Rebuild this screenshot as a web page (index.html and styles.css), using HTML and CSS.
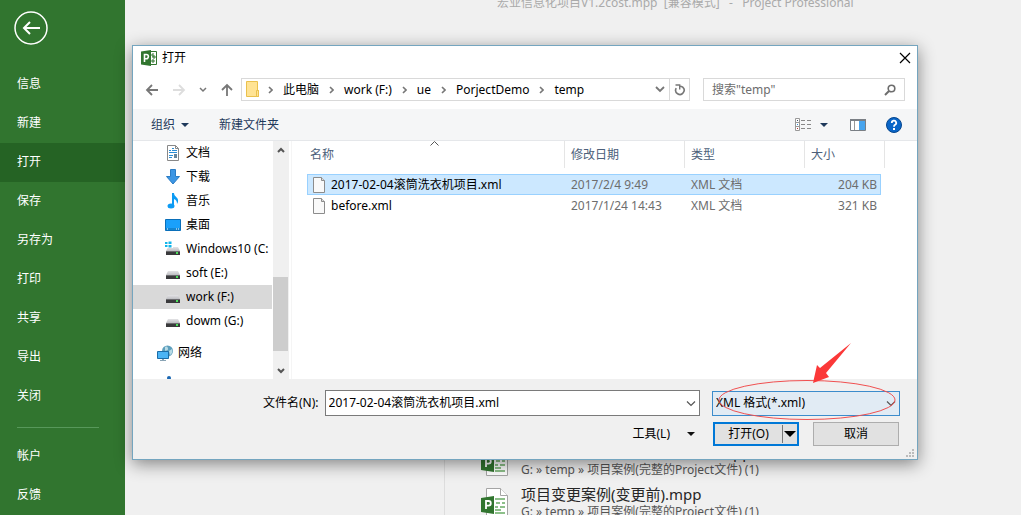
FILE: index.html
```
<!DOCTYPE html>
<html lang="zh-CN">

<head>
    <meta charset="utf-8">
    <title>打开</title>
    <link rel="stylesheet" href="styles.css">
</head>

<body>
    <!-- 共用图标 -->
    <svg class="defs" width="0" height="0" aria-hidden="true">
        <defs>
            <linearGradient id="disk-top" x1="0" y1="0" x2="0" y2="1">
                <stop offset="0" stop-color="#e4e4e6" />
                <stop offset="1" stop-color="#bdbec2" />
            </linearGradient>
            <symbol id="chevron" viewBox="0 0 5 8">
                <path d="M1 1l3 3-3 3" fill="none" stroke="#777" stroke-width="1.6" />
            </symbol>
            <symbol id="disk" viewBox="0 0 16 16">
                <path d="M3 5h10l2 4H1z" fill="url(#disk-top)" />
                <path d="M1 9h14v4H1z" fill="#3a3a3c" />
                <path d="M1 9h14v1H1z" fill="#6b6b6e" />
                <path d="M11 10h2v2h-2z" fill="#4be05a" />
            </symbol>
            <symbol id="file" viewBox="0 0 14 16">
                <path d="M1.500.5h8l3 3v12h-11z" fill="#f9f9f9" stroke="#8c8c8c" />
                <path d="M9.500.5v3h3" fill="#ddd" stroke="#8c8c8c" />
            </symbol>
            <symbol id="mpp" viewBox="0 0 28 32">
                <path d="M5.500 1.500h14l7 7v22h-21z" fill="#fff" stroke="#a5a5a5" />
                <path d="M19.500 1.500v7h7" fill="#fff" stroke="#a5a5a5" />
                <path d="M14 12h10M14 26h10M15 16h4M21 16h3M14 20h3M19 20h5M14 23h6" stroke="#8dc08a" stroke-width="2" />
                <path d="M0 11l13-2v18L0 25z" fill="#31752f" />
                <path d="M5 22v-8h2.500a2.200 2.200 0 0 1 0 4.600H5" fill="none" stroke="#fff" stroke-width="1.800" />
            </symbol>
        </defs>
    </svg>

    <nav class="menu">
        <button class="back" aria-label="返回">
            <svg width="34" height="34" viewBox="0 0 34 34" fill="none" stroke="#fff" stroke-width="2">
                <circle cx="17" cy="17" r="16" stroke-width="1.500" />
                <path d="M26 17H10M16 11l-6 6 6 6" />
            </svg>
        </button>
        <a href="#">信息</a>
        <a href="#">新建</a>
        <a href="#" class="active">打开</a>
        <a href="#">保存</a>
        <a href="#">另存为</a>
        <a href="#">打印</a>
        <a href="#">共享</a>
        <a href="#">导出</a>
        <a href="#">关闭</a>
        <hr>
        <a href="#">帐户</a>
        <a href="#">反馈</a>
    </nav>

    <main class="page">
        <div class="page-title">宏业信息化项目V1.2cost.mpp&nbsp; [兼容模式]&nbsp;&nbsp; -&nbsp;&nbsp; Project Professional</div>
        <div class="recent">
            <a href="#" class="recent-item">
                <svg width="28" height="32"><use href="#mpp" /></svg>
                <span>
                    <span class="recent-name">宏业信息化项目V1.2cost案例.mpp</span>
                    <span class="recent-path">G: » temp » 项目案例(完整的Project文件) (1)</span>
                </span>
            </a>
            <a href="#" class="recent-item">
                <svg width="28" height="32"><use href="#mpp" /></svg>
                <span>
                    <span class="recent-name">项目变更案例(变更前).mpp</span>
                    <span class="recent-path">G: » temp » 项目案例(完整的Project文件) (1)</span>
                </span>
            </a>
        </div>
    </main>

    <div class="dialog" role="dialog" aria-labelledby="dialog-title">
        <header class="titlebar">
            <svg width="16" height="16" viewBox="0 0 16 16">
                <path d="M8 1.500h7.500v13H8z" fill="#fff" stroke="#31752f" />
                <path d="M9 5h3M12 3v4M11 7h4M13 5v4M10 11h4M12 9v4" stroke="#31752f" />
                <path d="M0 1.500L10 0v16L0 14.500z" fill="#31752f" />
                <path d="M3.500 12V4.500h1.800a2 2 0 0 1 0 4.200H3.500" fill="none" stroke="#fff" stroke-width="1.600" />
            </svg>
            <span id="dialog-title">打开</span>
            <button class="close" aria-label="关闭">
                <svg width="12" height="12" viewBox="0 0 12 12"><path d="M1 1l10 10M11 1L1 11" stroke="#000" stroke-width="1.200" /></svg>
            </button>
        </header>

        <div class="navbar">
            <button aria-label="后退">
                <svg width="14" height="12" viewBox="0 0 14 12"><path d="M13 6H2M7 1L2 6l5 5" fill="none" stroke="#777" stroke-width="1.800" /></svg>
            </button>
            <button aria-label="前进">
                <svg width="14" height="12" viewBox="0 0 14 12"><path d="M1 6h11M7 1l5 5-5 5" fill="none" stroke="#ddd" stroke-width="1.800" /></svg>
            </button>
            <button aria-label="最近位置" class="small">
                <svg width="8" height="6" viewBox="0 0 8 6"><path d="M1 1l3 3 3-3" fill="none" stroke="#777" stroke-width="1.500" /></svg>
            </button>
            <button aria-label="向上">
                <svg width="12" height="13" viewBox="0 0 12 13"><path d="M6 13V2M1 7l5-5 5 5" fill="none" stroke="#777" stroke-width="1.800" /></svg>
            </button>
            <div class="address">
                <svg width="14" height="17" viewBox="0 0 14 17">
                    <path d="M.5.5h11v9h1v6H.5z" fill="#ffe394" stroke="#eac14d" />
                    <path d="M10.500 15.500v-6h2v6z" fill="#ffe394" stroke="#eac14d" />
                </svg>
                <svg class="sep" width="5" height="8"><use href="#chevron" /></svg>
                <button>此电脑</button>
                <svg class="sep" width="5" height="8"><use href="#chevron" /></svg>
                <button>work (F:)</button>
                <svg class="sep" width="5" height="8"><use href="#chevron" /></svg>
                <button>ue</button>
                <svg class="sep" width="5" height="8"><use href="#chevron" /></svg>
                <button>PorjectDemo</button>
                <svg class="sep" width="5" height="8"><use href="#chevron" /></svg>
                <button>temp</button>
                <button class="history" aria-label="历史记录">
                    <svg width="10" height="7" viewBox="0 0 10 7"><path d="M1 1l4 4 4-4" fill="none" stroke="#777" stroke-width="1.800" /></svg>
                </button>
                <button class="refresh" aria-label="刷新">
                    <svg width="12" height="12" viewBox="0 0 12 12" fill="none" stroke="#777" stroke-width="1.600">
                        <path d="M2.200 4.200a4.200 4.200 0 1 0 6.500-1.100Q7.500 2.200 5 2.300" />
                        <path d="M1.500 1h4.200v4.500" stroke-width="1.400" />
                    </svg>
                </button>
            </div>
            <div class="search">
                <input type="text" placeholder='搜索"temp"' aria-label="搜索">
                <svg width="12" height="12" viewBox="0 0 12 12" fill="none" stroke="#6d6d6d">
                    <circle cx="7.500" cy="4.500" r="3.300" stroke-width="1.600" />
                    <path d="M5 7L1 11" stroke-width="2" />
                </svg>
            </div>
        </div>

        <div class="toolbar">
            <button>组织 <svg width="8" height="4" viewBox="0 0 8 4"><path d="M0 0h8L4 4z" fill="#1e395b" /></svg></button>
            <button>新建文件夹</button>
            <button class="view" aria-label="更改视图">
                <svg width="17" height="13" viewBox="0 0 17 13">
                    <path d="M.5.500h4v12h-4zM0 4.500h5M0 8.500h5" fill="#fff" stroke="#999" />
                    <path d="M2 2h1v1H2z" fill="#456" />
                    <path d="M2 6h1v1H2z" fill="#2a8dd4" />
                    <path d="M2 10h1v1H2z" fill="#b33" />
                    <path d="M6 2.500h4M12 2.500h4M6 6.500h4M12 6.500h4M6 10.500h4M12 10.500h4" stroke="#888" />
                </svg>
                <svg width="8" height="4" viewBox="0 0 8 4"><path d="M0 0h8L4 4z" fill="#1e395b" /></svg>
            </button>
            <button class="preview" aria-label="预览窗格">
                <svg width="16" height="12" viewBox="0 0 16 12">
                    <path d="M.5.500h15v11H.5z" fill="#fff" stroke="#7a7f85" />
                    <path d="M0 0h16v2H0z" fill="#7a7f85" />
                    <path d="M4.500 2v9" stroke="#999" />
                    <path d="M9 2h6v9H9z" fill="#48a5ee" />
                </svg>
            </button>
            <button aria-label="帮助">
                <svg width="16" height="16" viewBox="0 0 16 16">
                    <circle cx="8" cy="8" r="7.500" fill="#0a66c8" stroke="#05468e" />
                    <path d="M5.800 6a2.200 2.200 0 1 1 3.300 1.800C8.200 8.300 8 8.700 8 9.800" fill="none" stroke="#fff" stroke-width="1.800" />
                    <path d="M7 11h2v2H7z" fill="#fff" />
                </svg>
            </button>
        </div>

        <div class="body">
            <div class="tree">
                <a href="#">
                    <svg width="16" height="16" viewBox="0 0 16 16">
                        <path d="M2.500.5h8l3 3v12h-11z" fill="#fff" stroke="#888" />
                        <path d="M10.500.5v3h3" fill="none" stroke="#888" />
                        <path d="M4 5.500h2M7 3.500h2M7 5.500h5M4 7.500h8M4 10.500h4M4 12.500h3" stroke="#2a8dd4" />
                        <path d="M9 9h3v4H9z" fill="#66859b" />
                    </svg>文档
                </a>
                <a href="#">
                    <svg width="16" height="16" viewBox="0 0 16 16"><path d="M5.500.5h5v7h4L8 15 1.500 7.500h4z" fill="#3c96e4" stroke="#2a7cc5" /></svg>下载
                </a>
                <a href="#">
                    <svg width="16" height="16" viewBox="0 0 16 16">
                        <path d="M7 0h2c0 4 5 4 4 9l-1 2c0-3-1-4-3-5v7H7z" fill="#0c9bf4" />
                        <ellipse cx="6" cy="13" rx="3.500" ry="2.500" fill="#0c9bf4" />
                    </svg>音乐
                </a>
                <a href="#">
                    <svg width="16" height="16" viewBox="0 0 16 16">
                        <path d="M.5 2.500h15v11H.5z" fill="#1aa0fb" stroke="#0a6fb9" />
                        <path d="M1 12h14" stroke="#0d6ba8" />
                        <path d="M2 12h1M11 12h1M13 12h1" stroke="#fff" />
                    </svg>桌面
                </a>
                <a href="#">
                    <svg width="16" height="16" viewBox="0 0 16 16">
                        <use href="#disk" width="16" height="16" y="1" />
                        <path d="M0 0h8v7H0z" fill="#fff" />
                        <path d="M0 1h2.500v2H0zM3.500.500h3V3h-3zM0 4h2.500v2H0zM3.500 4h3v2.500h-3z" fill="#12b5ea" />
                    </svg>Windows10 (C:
                </a>
                <a href="#"><svg width="16" height="16"><use href="#disk" y="1" /></svg>soft (E:)</a>
                <a href="#" class="current"><svg width="16" height="16"><use href="#disk" y="1" /></svg>work (F:)</a>
                <a href="#"><svg width="16" height="16"><use href="#disk" y="1" /></svg>dowm (G:)</a>
                <a href="#" class="root">
                    <svg width="16" height="16" viewBox="0 0 16 16">
                        <circle cx="10.500" cy="6" r="5.500" fill="#5d9fbd" />
                        <path d="M8 2c2-1 3 0 3 2s-2 1-3 2zM12 6l3-2c1 3 0 5-2 6z" fill="#b8dbe6" />
                        <path d="M.5 6.500h11v7H.5z" fill="#4bb4f5" stroke="#1b6da8" />
                        <path d="M5 14h2v1h2v1H3v-1h2z" fill="#8aa4b5" />
                    </svg>网络
                </a>
                <a href="#" class="root next" aria-label="家庭组">
                    <svg width="16" height="16" viewBox="0 0 16 16"><circle cx="12" cy="2" r="2" fill="#1b67b3" /></svg>
                </a>
            </div>
            <div class="scrollbar">
                <button aria-label="向上滚动"><svg width="8" height="6" viewBox="0 0 8 6"><path d="M1 5l3-3 3 3" fill="none" stroke="#555" stroke-width="2" /></svg></button>
                <div class="thumb"></div>
                <button aria-label="向下滚动"><svg width="8" height="6" viewBox="0 0 8 6"><path d="M1 1l3 3 3-3" fill="none" stroke="#555" stroke-width="2" /></svg></button>
            </div>
            <div class="files">
                <table>
                    <colgroup>
                        <col class="col-name">
                        <col class="col-date">
                        <col class="col-type">
                        <col class="col-size">
                        <col class="col-end">
                    </colgroup>
                    <thead>
                        <tr>
                            <th>名称<svg class="sort" width="9" height="5" viewBox="0 0 9 5"><path d="M.5 4.500l4-4 4 4" fill="none" stroke="#555" /></svg></th>
                            <th>修改日期</th>
                            <th>类型</th>
                            <th colspan="2">大小</th>
                        </tr>
                    </thead>
                    <tbody>
                        <tr class="selected">
                            <td><span class="file"><svg width="14" height="16"><use href="#file" /></svg>2017-02-04滚筒洗衣机项目.xml</span></td>
                            <td>2017/2/4 9:49</td>
                            <td>XML 文档</td>
                            <td>204 KB</td>
                        </tr>
                        <tr>
                            <td><span class="file"><svg width="14" height="16"><use href="#file" /></svg>before.xml</span></td>
                            <td>2017/1/24 14:43</td>
                            <td>XML 文档</td>
                            <td>321 KB</td>
                        </tr>
                    </tbody>
                </table>
            </div>
        </div>

        <footer class="footer">
            <div class="row">
                <label for="filename">文件名(N):</label>
                <div class="combo">
                    <input type="text" id="filename" value="2017-02-04滚筒洗衣机项目.xml">
                    <button aria-label="展开">
                        <svg width="10" height="6" viewBox="0 0 10 6"><path d="M1 .5l4 4 4-4" fill="none" stroke="#555" stroke-width="1.200" /></svg>
                    </button>
                </div>
                <div class="filter">
                    <select aria-label="文件类型">
                        <option>XML 格式(*.xml)</option>
                    </select>
                    <svg class="arrow" width="10" height="6" viewBox="0 0 10 6"><path d="M1 .5l4 4 4-4" fill="none" stroke="#555" stroke-width="1.200" /></svg>
                    <!-- 红色标注 -->
                    <svg class="mark" width="190" height="84" viewBox="0 0 190 84">
                        <ellipse cx="95" cy="60" rx="88" ry="19.500" fill="none" stroke="#f05050" />
                        <path d="M101 43l4-18 3 3 31-25-25 30 3 4z" fill="#fb3838" />
                    </svg>
                </div>
            </div>
            <div class="row actions">
                <button class="tools">工具(L) <svg width="8" height="4" viewBox="0 0 8 4"><path d="M0 0h8L4 4z" fill="#111" /></svg></button>
                <div class="split">
                    <button class="open">打开(O)</button>
                    <button class="more" aria-label="更多打开方式"><svg width="12" height="6" viewBox="0 0 12 6"><path d="M0 0h12L6 6z" /></svg></button>
                </div>
                <button class="cancel">取消</button>
            </div>
            <svg class="grip" width="8" height="8" viewBox="0 0 8 8"><path d="M6 0h2v2H6zM3 3h2v2H3zM6 3h2v2H6zM0 6h2v2H0zM3 6h2v2H3zM6 6h2v2H6z" fill="#bbb" /></svg>
        </footer>
    </div>
</body>

</html>
```
FILE: styles.css
```
* {
    box-sizing: border-box;
}

body {
    margin: 0;
    height: 100vh;
    display: flex;
    overflow: hidden;
    background: #f0f0f0;
    color: #000;
    font: 12px/16px "Noto Sans", "Noto Sans CJK SC", sans-serif;
}

button,
input,
select {
    margin: 0;
    padding: 0;
    border: 0;
    background: none;
    color: inherit;
    font: inherit;
}

a {
    color: inherit;
    text-decoration: none;
}

svg {
    flex: none;
}

.defs {
    position: absolute;
}

/* 左侧菜单 */
.menu {
    width: 125px;
    flex: none;
    display: flex;
    flex-direction: column;
    padding-top: 11px;
    background: #31752f;
    color: #fff;
}

.menu a {
    padding: 0 17px;
    line-height: 38px;
    padding-bottom: 1px;
}

.menu .active {
    background: #256324;
}

.menu hr {
    width: 82px;
    margin: 11px 17px 9px;
    border: 0;
    border-top: 1px solid #57985a;
}

.back {
    height: 34px;
    margin: 0 14px 20px;
    text-align: left;
}

.back svg {
    display: block;
}

/* 后面的页面 */
.page {
    flex: 1;
    display: flex;
    flex-direction: column;
    justify-content: space-between;
    overflow: hidden;
}

.page-title {
    height: 11px;
    padding-left: 372px;
    line-height: 6px;
    color: #aaa;
    white-space: nowrap;
}

.recent {
    height: 72px;
    margin-left: 319px;
    padding-left: 36px;
    border-left: 1px solid #ddd;
}

.recent-item {
    height: 42px;
    display: flex;
    gap: 12px;
    white-space: nowrap;
}

.recent-item svg {
    margin-top: 2px;
}

.recent-name,
.recent-path {
    display: block;
    line-height: 18px;
}

.recent-name {
    color: #262626;
    font-size: 15px;
}

.recent-path {
    color: #555;
}

/* 打开对话框 */
.dialog {
    position: absolute;
    top: 45px;
    right: 103px;
    bottom: 55px;
    left: 132px;
    display: flex;
    flex-direction: column;
    border: 1px solid #74a5bf;
    background: #fff;
    box-shadow: 0 4px 16px rgba(0, 0, 0, 0.45);
}

.titlebar {
    height: 24px;
    display: flex;
    align-items: center;
    gap: 5px;
    padding: 0 6px 0 8px;
}

.close {
    height: 12px;
    margin-left: auto;
    line-height: 0;
}

.navbar {
    display: flex;
    align-items: center;
    gap: 13px;
    padding: 8px 12px;
}

.navbar > button {
    width: 14px;
    line-height: 0;
}

.navbar > .small {
    width: 8px;
}

.address,
.search {
    height: 23px;
    display: flex;
    align-items: center;
    border: 1px solid #d9d9d9;
}

.address {
    flex: 1;
    padding-left: 4px;
    margin-left: -6px;
}

.address .sep {
    margin: 0 10px;
}

.address .sep:nth-child(2) {
    margin-left: 8px;
}

.history {
    margin-left: auto;
    padding-right: 4px;
    line-height: 0;
}

.refresh {
    width: 20px;
    height: 21px;
    border-left: 1px solid #d9d9d9;
    line-height: 0;
}

.search {
    width: 202px;
    padding: 0 8px;
}

.search input {
    flex: 1;
    min-width: 0;
    outline: 0;
}

.search input::placeholder {
    color: #6d6d6d;
}

.toolbar {
    height: 32px;
    display: flex;
    align-items: center;
    padding: 0 15px 0 18px;
    border-bottom: 1px solid #e5e7ea;
    background: #f5f6f7;
    color: #1e395b;
}

.toolbar button {
    display: flex;
    align-items: center;
    gap: 6px;
    margin-right: 30px;
}

.toolbar .view {
    gap: 8px;
    margin: 0 22px 0 auto;
}

.toolbar .preview {
    margin-right: 20px;
}

.toolbar button:last-child {
    margin-right: 0;
}

.body {
    flex: 1;
    min-height: 0;
    display: flex;
}

.tree {
    width: 139px;
    overflow: hidden;
    white-space: nowrap;
}

.tree a {
    height: 24px;
    display: flex;
    align-items: center;
    gap: 5px;
    padding-left: 32px;
}

.tree .current {
    background: #d9d9d9;
}

.tree .root {
    margin-top: 8px;
    padding-left: 24px;
}

.tree .next {
    margin-top: 7px;
}

.scrollbar {
    width: 16px;
    display: flex;
    flex-direction: column;
    margin-left: 1px;
    background: #f0f0f0;
}

.scrollbar button {
    height: 17px;
    line-height: 0;
}

.thumb {
    height: 74px;
    margin: auto 1px 11px 0;
    background: #cdcdcd;
}

.files {
    flex: 1;
    min-width: 0;
    margin-left: 2px;
    padding-left: 15px;
    border-left: 1px solid #f5f5f5;
    overflow: hidden;
}

table {
    width: 578px;
    table-layout: fixed;
    border-collapse: separate;
    border-spacing: 0;
}

.col-name {
    width: 258px;
}

.col-date,
.col-type {
    width: 120px;
}

.col-size {
    width: 76px;
}

.col-end {
    width: 4px;
}

th {
    position: relative;
    height: 27px;
    padding: 0 6px;
    border-right: 1px solid #e5e5e5;
    color: #4c607a;
    font-weight: normal;
    text-align: left;
}

th:first-child {
    padding-left: 3px;
}

.sort {
    position: absolute;
    top: 0;
    left: 123px;
}

tbody::before {
    content: "";
    display: block;
    height: 6px;
}

td {
    height: 21px;
    padding: 0 6px;
    color: #6d6d6d;
}

td:first-child {
    padding-left: 5px;
    color: #000;
}

td:nth-child(4) {
    padding: 0 4px;
    text-align: right;
}

.selected td {
    border: 1px solid #99d1ff;
    border-width: 1px 0;
    background: #cce8ff;
}

.selected td:first-child {
    border-left-width: 1px;
    padding-left: 4px;
}

.selected td:last-child {
    border-right-width: 1px;
    padding-right: 3px;
}

.file {
    display: flex;
    align-items: center;
    gap: 5px;
}

/* 底部 */
.footer {
    position: relative;
    height: 80px;
    padding: 11px 17px 0 130px;
    background: #f0f0f0;
}

.row {
    display: flex;
    align-items: center;
}

.combo {
    flex: 1;
    height: 26px;
    display: flex;
    margin: 0 12px 0 6px;
    border: 1px solid #7a7a7a;
    background: #fff;
}

.combo input {
    flex: 1;
    min-width: 0;
    padding: 0 3px;
    outline: 0;
}

.combo button {
    width: 16px;
}

.filter {
    position: relative;
    width: 188px;
}

.filter select {
    width: 100%;
    height: 25px;
    display: block;
    padding: 0 3px;
    border: 1px solid #3c8ccc;
    background: #e1ebf4;
    appearance: none;
}

.arrow {
    position: absolute;
    top: 10px;
    right: 4px;
    pointer-events: none;
}

.mark {
    position: absolute;
    top: -51px;
    left: 0;
    pointer-events: none;
}

.actions {
    justify-content: flex-end;
    margin-top: 6px;
}

.tools {
    display: flex;
    align-items: center;
    gap: 17px;
    margin-right: 18px;
}

.split {
    width: 86px;
    height: 24px;
    display: flex;
    align-items: center;
    margin-right: 14px;
    border: 2px solid #0078d7;
    background: #e1e1e1;
}

.open {
    flex: 1;
}

.more {
    width: 15px;
    height: 18px;
    border-left: 1px solid #777;
    line-height: 0;
}

.cancel {
    width: 86px;
    height: 24px;
    margin-right: 1px;
    border: 1px solid #adadad;
    background: #e1e1e1;
}

.grip {
    position: absolute;
    right: 3px;
    bottom: 2px;
}
```
